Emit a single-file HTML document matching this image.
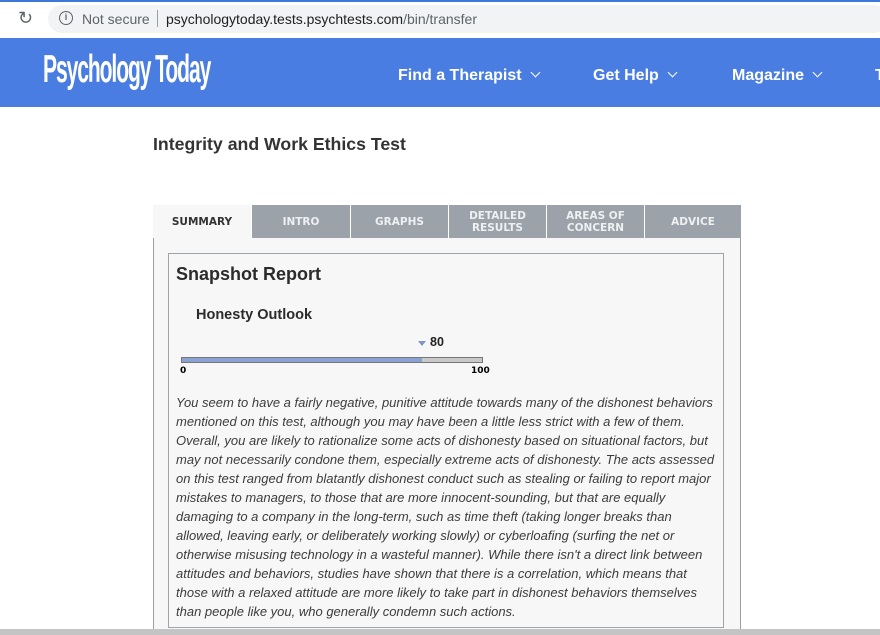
<!DOCTYPE html>
<html><head><meta charset="utf-8"><style>
*{margin:0;padding:0;box-sizing:border-box}
html,body{width:880px;height:635px;overflow:hidden}
body{background:#fff;font-family:"Liberation Sans",Arial,sans-serif;position:relative}
.abs{position:absolute}
#top{left:0;top:0;width:880px;height:38px;background:#fff;border-top:2px solid #3b78d8}
#pill{left:48px;top:5px;width:840px;height:28px;background:#f1f3f4;border-radius:14px}
#hdr{left:0;top:38px;width:880px;height:69px;background:#4a7de2}
.nav{color:#fff;font-weight:bold;font-size:16px;top:67px}
.chev{display:inline-block;width:7px;height:7px;border-right:1.5px solid #fff;border-bottom:1.5px solid #fff;transform:rotate(45deg);margin-left:10px;position:relative;top:-4px}
#box{left:153px;top:205px;width:588px;height:440px;background:#f7f7f7;border:1px solid #9aa0a6}
.tab{top:205px;height:33px;background:#9ba2a9;color:#eef0f2;font-size:10.5px;font-weight:bold;text-align:center;display:flex;align-items:center;justify-content:center;line-height:12px;border-left:1px solid #fff;font-family:"DejaVu Sans",sans-serif}
#inner{left:168px;top:253px;width:556px;height:375px;border:1px solid #a0a4a8;background:#f7f7f7}
.p{left:176px;font-size:13px;font-style:italic;color:#3c3c3c;white-space:nowrap}
</style></head><body>
<div id="top" class="abs"></div>
<div id="pill" class="abs"></div>
<div class="abs" style="left:18px;top:8px;font-size:18px;color:#5f6368">&#x21bb;</div>
<div class="abs" style="left:59px;top:11px;width:14px;height:14px;border:1.5px solid #5f6368;border-radius:50%;font-size:9px;font-weight:bold;color:#5f6368;text-align:center;line-height:11px">i</div>
<div class="abs" style="left:82px;top:11px;font-size:14px;color:#5f6368">Not secure</div>
<div class="abs" style="left:157px;top:10px;width:1px;height:17px;background:#9aa0a6"></div>
<div class="abs" style="left:166px;top:11px;font-size:14px;color:#202124">psychologytoday.tests.psychtests.com<span style="color:#5f6368">/bin/transfer</span></div>
<div id="hdr" class="abs"></div>
<div class="abs" style="left:43px;top:48px;color:#fff;font-weight:bold;font-size:39px;letter-spacing:-2px;transform:scaleX(0.54);transform-origin:left;line-height:44px;white-space:nowrap">Psychology Today</div>
<div class="abs nav" style="left:398px">Find a Therapist<span class="chev"></span></div>
<div class="abs nav" style="left:593px">Get Help<span class="chev"></span></div>
<div class="abs nav" style="left:732px">Magazine<span class="chev"></span></div>
<div class="abs nav" style="left:875px">T</div>
<div class="abs" style="left:153px;top:134px;font-size:17.7px;font-weight:bold;color:#333">Integrity and Work Ethics Test</div>
<div id="box" class="abs"></div>
<div class="abs tab" style="left:153px;width:98px;background:#f7f7f7;color:#333;border-left:none">SUMMARY</div>
<div class="abs tab" style="left:251px;width:99px">INTRO</div>
<div class="abs tab" style="left:350px;width:98px">GRAPHS</div>
<div class="abs tab" style="left:448px;width:98px">DETAILED<br>RESULTS</div>
<div class="abs tab" style="left:546px;width:98px">AREAS OF<br>CONCERN</div>
<div class="abs tab" style="left:644px;width:97px">ADVICE</div>
<div id="inner" class="abs"></div>
<div class="abs" style="left:176px;top:264px;font-size:18px;font-weight:bold;color:#2b2b2b">Snapshot Report</div>
<div class="abs" style="left:196px;top:307px;font-size:14.5px;font-weight:bold;color:#2b2b2b">Honesty Outlook</div>
<div class="abs" style="left:418px;top:341px;width:0;height:0;border-left:4px solid transparent;border-right:4px solid transparent;border-top:5px solid #7f95c8"></div>
<div class="abs" style="left:430px;top:335px;font-size:12.5px;font-weight:bold;color:#222">80</div>
<div class="abs" style="left:181px;top:357px;width:302px;height:6px;background:#c8c8c8;border:1px solid #777"></div>
<div class="abs" style="left:182px;top:358px;width:240px;height:4px;background:#8aa1d1"></div>
<div class="abs" style="left:180px;top:366px;font-size:9px;font-weight:bold;font-family:'DejaVu Sans',sans-serif">0</div>
<div class="abs" style="left:471px;top:366px;font-size:9px;font-weight:bold;font-family:'DejaVu Sans',sans-serif">100</div>
<div class="abs p" style="top:395px">You seem to have a fairly negative, punitive attitude towards many of the dishonest behaviors</div>
<div class="abs p" style="top:414px">mentioned on this test, although you may have been a little less strict with a few of them.</div>
<div class="abs p" style="top:433px">Overall, you are likely to rationalize some acts of dishonesty based on situational factors, but</div>
<div class="abs p" style="top:452px">may not necessarily condone them, especially extreme acts of dishonesty. The acts assessed</div>
<div class="abs p" style="top:471px">on this test ranged from blatantly dishonest conduct such as stealing or failing to report major</div>
<div class="abs p" style="top:490px">mistakes to managers, to those that are more innocent-sounding, but that are equally</div>
<div class="abs p" style="top:509px">damaging to a company in the long-term, such as time theft (taking longer breaks than</div>
<div class="abs p" style="top:528px">allowed, leaving early, or deliberately working slowly) or cyberloafing (surfing the net or</div>
<div class="abs p" style="top:547px">otherwise misusing technology in a wasteful manner). While there isn't a direct link between</div>
<div class="abs p" style="top:566px">attitudes and behaviors, studies have shown that there is a correlation, which means that</div>
<div class="abs p" style="top:585px">those with a relaxed attitude are more likely to take part in dishonest behaviors themselves</div>
<div class="abs p" style="top:604px">than people like you, who generally condemn such actions.</div>
<div class="abs" style="left:0;top:629px;width:880px;height:6px;background:#c4c4c4"></div>
</body></html>
